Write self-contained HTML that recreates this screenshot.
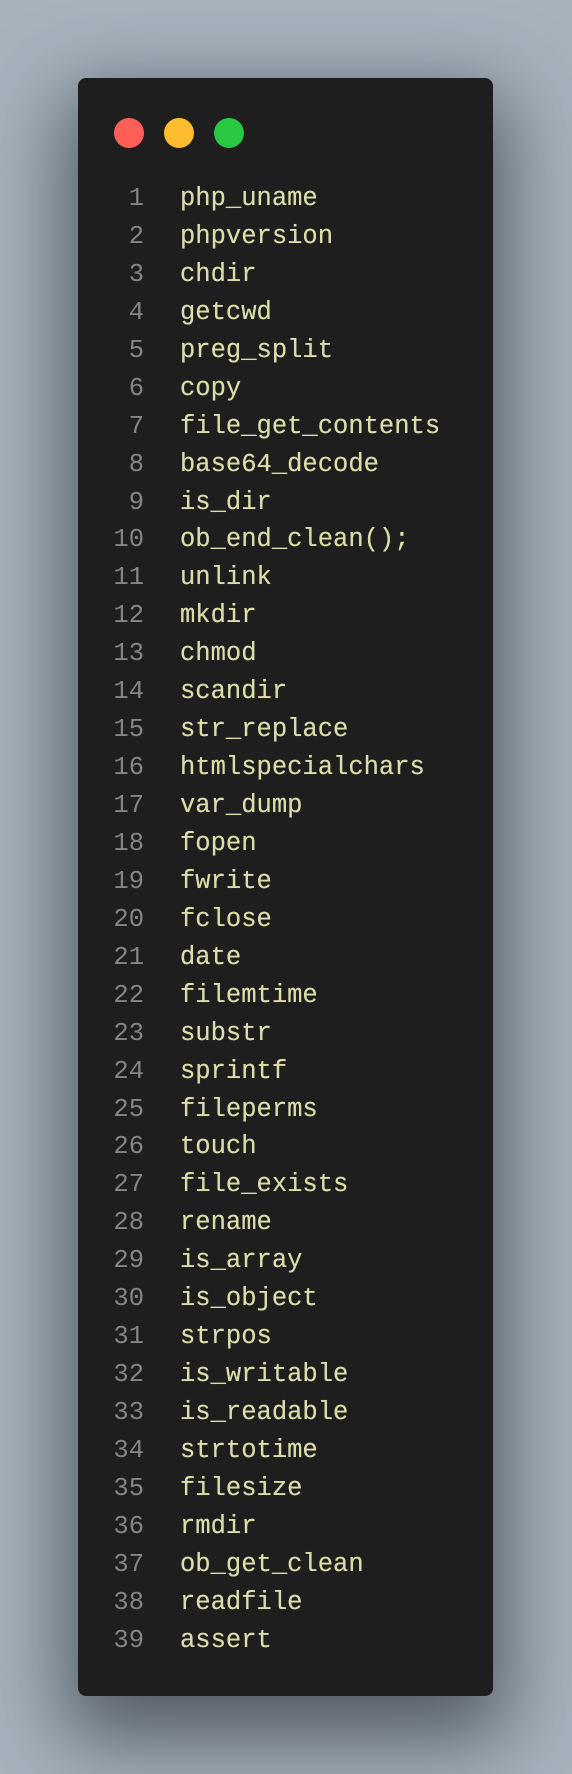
<!DOCTYPE html>
<html><head><meta charset="utf-8"><style>
html,body{margin:0;padding:0;}
body{width:572px;height:1774px;background:#a7b2bd;position:relative;overflow:hidden;}
.card{position:absolute;left:78px;top:78px;width:415px;height:1618px;background:#1e1e1e;border-radius:8px;box-shadow:0 30px 80px 15px rgba(40,48,58,0.65);}
.dot{position:absolute;top:118px;width:30px;height:30px;border-radius:50%;}
.code{position:absolute;left:0;top:180px;font-family:"Liberation Mono",monospace;font-size:25.5px;line-height:37.95px;}
.row{height:37.95px;white-space:pre;}
.n{display:inline-block;width:144px;text-align:right;color:#858585;}
.t{position:absolute;left:180px;color:#dcdcaa;text-shadow:0 0 0.4px #dcdcaa;}
</style></head><body>
<div class="card"></div>
<div class="dot" style="left:114px;background:#ff5f57"></div>
<div class="dot" style="left:164px;background:#febc2e"></div>
<div class="dot" style="left:214px;background:#28c840"></div>
<div class="code">
<div class="row"><span class="n">1</span><span class="t">php_uname</span></div>
<div class="row"><span class="n">2</span><span class="t">phpversion</span></div>
<div class="row"><span class="n">3</span><span class="t">chdir</span></div>
<div class="row"><span class="n">4</span><span class="t">getcwd</span></div>
<div class="row"><span class="n">5</span><span class="t">preg_split</span></div>
<div class="row"><span class="n">6</span><span class="t">copy</span></div>
<div class="row"><span class="n">7</span><span class="t">file_get_contents</span></div>
<div class="row"><span class="n">8</span><span class="t">base64_decode</span></div>
<div class="row"><span class="n">9</span><span class="t">is_dir</span></div>
<div class="row"><span class="n">10</span><span class="t">ob_end_clean();</span></div>
<div class="row"><span class="n">11</span><span class="t">unlink</span></div>
<div class="row"><span class="n">12</span><span class="t">mkdir</span></div>
<div class="row"><span class="n">13</span><span class="t">chmod</span></div>
<div class="row"><span class="n">14</span><span class="t">scandir</span></div>
<div class="row"><span class="n">15</span><span class="t">str_replace</span></div>
<div class="row"><span class="n">16</span><span class="t">htmlspecialchars</span></div>
<div class="row"><span class="n">17</span><span class="t">var_dump</span></div>
<div class="row"><span class="n">18</span><span class="t">fopen</span></div>
<div class="row"><span class="n">19</span><span class="t">fwrite</span></div>
<div class="row"><span class="n">20</span><span class="t">fclose</span></div>
<div class="row"><span class="n">21</span><span class="t">date</span></div>
<div class="row"><span class="n">22</span><span class="t">filemtime</span></div>
<div class="row"><span class="n">23</span><span class="t">substr</span></div>
<div class="row"><span class="n">24</span><span class="t">sprintf</span></div>
<div class="row"><span class="n">25</span><span class="t">fileperms</span></div>
<div class="row"><span class="n">26</span><span class="t">touch</span></div>
<div class="row"><span class="n">27</span><span class="t">file_exists</span></div>
<div class="row"><span class="n">28</span><span class="t">rename</span></div>
<div class="row"><span class="n">29</span><span class="t">is_array</span></div>
<div class="row"><span class="n">30</span><span class="t">is_object</span></div>
<div class="row"><span class="n">31</span><span class="t">strpos</span></div>
<div class="row"><span class="n">32</span><span class="t">is_writable</span></div>
<div class="row"><span class="n">33</span><span class="t">is_readable</span></div>
<div class="row"><span class="n">34</span><span class="t">strtotime</span></div>
<div class="row"><span class="n">35</span><span class="t">filesize</span></div>
<div class="row"><span class="n">36</span><span class="t">rmdir</span></div>
<div class="row"><span class="n">37</span><span class="t">ob_get_clean</span></div>
<div class="row"><span class="n">38</span><span class="t">readfile</span></div>
<div class="row"><span class="n">39</span><span class="t">assert</span></div>
</div>
</body></html>
